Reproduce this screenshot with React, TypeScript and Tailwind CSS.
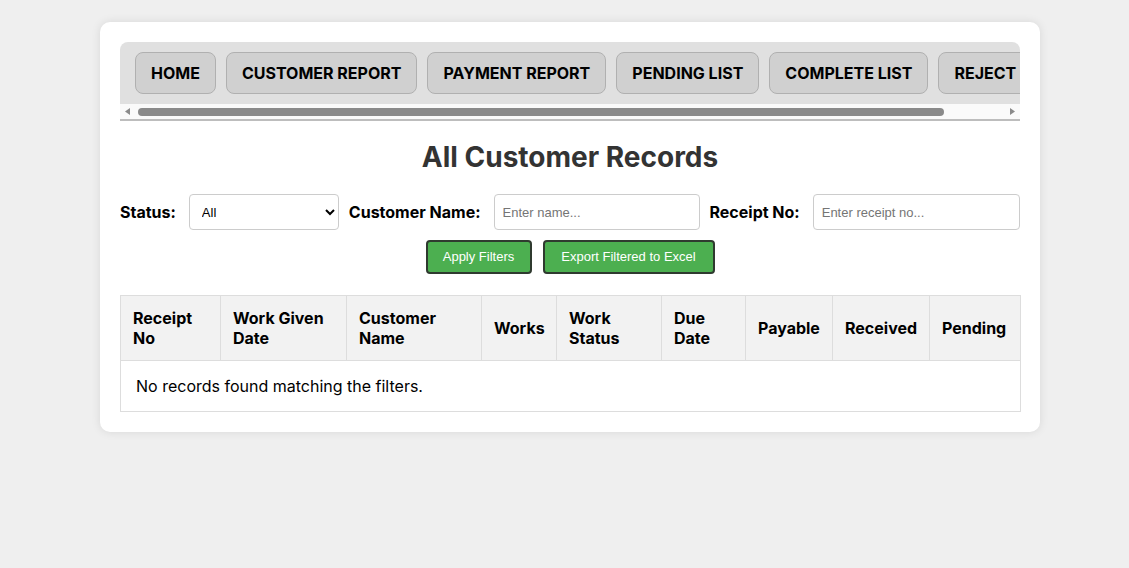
export default function App() {
  const tabs = ["HOME", "CUSTOMER REPORT", "PAYMENT REPORT", "PENDING LIST", "COMPLETE LIST", "REJECT LIST"];
  const cols = [
    { label: "Receipt No", w: "w-[100px]" },
    { label: "Work Given Date", w: "w-[126px]" },
    { label: "Customer Name", w: "w-[135px]" },
    { label: "Works", w: "w-[75px]" },
    { label: "Work Status", w: "w-[105px]" },
    { label: "Due Date", w: "w-[84px]" },
    { label: "Payable", w: "w-[87px]" },
    { label: "Received", w: "w-[97px]" },
    { label: "Pending", w: "w-[91px]" },
  ];

  return (
    <div className="min-h-[568px] bg-[#efefef] pt-[22px] font-['Inter',sans-serif] text-black">
      <div className="ml-[100px] w-[940px] rounded-[10px] bg-white p-5 shadow-[0_0_10px_rgba(0,0,0,0.1)]">
        {/* nav with scroll strip */}
        <div className="overflow-hidden rounded-t-lg border-b-2 border-[#bdbdbd] bg-[#e0e0e0]">
          <div className="flex gap-[10px] overflow-hidden whitespace-nowrap px-[15px] py-[10px]">
            {tabs.map((t) => (
              <button
                key={t}
                className="shrink-0 rounded-lg border border-[#b0b0b0] bg-[#d0d0d0] px-[15px] py-[10px] text-base font-bold leading-5 text-black"
              >
                {t}
              </button>
            ))}
          </div>
          <div className="flex h-[15px] items-center bg-[#fafafa] px-[3px]">
            <svg width="9" height="9" viewBox="0 0 9 9" className="shrink-0">
              <path d="M7 1 L2 4.5 L7 8 Z" fill="#8a8a8a" />
            </svg>
            <div className="ml-[6px] h-[8px] w-[806px] rounded-full bg-[#8a8a8a]" />
            <div className="flex-1" />
            <svg width="9" height="9" viewBox="0 0 9 9" className="shrink-0">
              <path d="M2 1 L7 4.5 L2 8 Z" fill="#8a8a8a" />
            </svg>
          </div>
        </div>

        <h2 className="mt-[19px] text-center text-[28px] font-bold leading-[34px] text-[#333]">All Customer Records</h2>

        <div className="mt-[20px] flex items-center gap-[10px] whitespace-nowrap">
          <label className="mr-[3px] shrink-0 text-base font-bold">Status:</label>
          <select className="h-9 w-[150px] shrink-0 rounded border border-[#ccc] bg-white px-2 font-['Liberation_Sans',Arial,sans-serif] text-[13px]">
            <option>All</option>
            <option>Pending</option>
            <option>Complete</option>
            <option>Reject</option>
          </select>
          <label className="mr-[3px] shrink-0 text-base font-bold">Customer Name:</label>
          <input
            placeholder="Enter name..."
            className="h-9 w-[206px] shrink-0 rounded border border-[#ccc] px-2 font-['Liberation_Sans',Arial,sans-serif] text-[13px] placeholder:text-[#757575]"
          />
          <label className="mr-[3px] shrink-0 text-base font-bold">Receipt No:</label>
          <input
            placeholder="Enter receipt no..."
            className="h-9 min-w-0 flex-1 rounded border border-[#ccc] px-2 font-['Liberation_Sans',Arial,sans-serif] text-[13px] placeholder:text-[#757575]"
          />
        </div>

        <div className="mt-[10px] flex justify-center gap-[11px] font-['Liberation_Sans',Arial,sans-serif] text-[13px] text-white">
          <button className="h-[34px] w-[106px] rounded border-2 border-[#2f3a2f] bg-[#4caf50]">Apply Filters</button>
          <button className="h-[34px] w-[172px] rounded border-2 border-[#2f3a2f] bg-[#4caf50]">Export Filtered to Excel</button>
        </div>

        <table className="mt-[21px] w-full table-fixed border-collapse border border-[#ddd]">
          <thead>
            <tr className="bg-[#f2f2f2]">
              {cols.map((c) => (
                <th
                  key={c.label}
                  className={`${c.w} border border-[#ddd] px-3 py-3 text-left align-middle text-base font-bold leading-5`}
                >
                  {c.label}
                </th>
              ))}
            </tr>
          </thead>
          <tbody>
            <tr>
              <td colSpan={9} className="border border-[#ddd] px-[15px] py-[13px] text-base leading-6">
                No records found matching the filters.
              </td>
            </tr>
          </tbody>
        </table>
      </div>
    </div>
  );
}
